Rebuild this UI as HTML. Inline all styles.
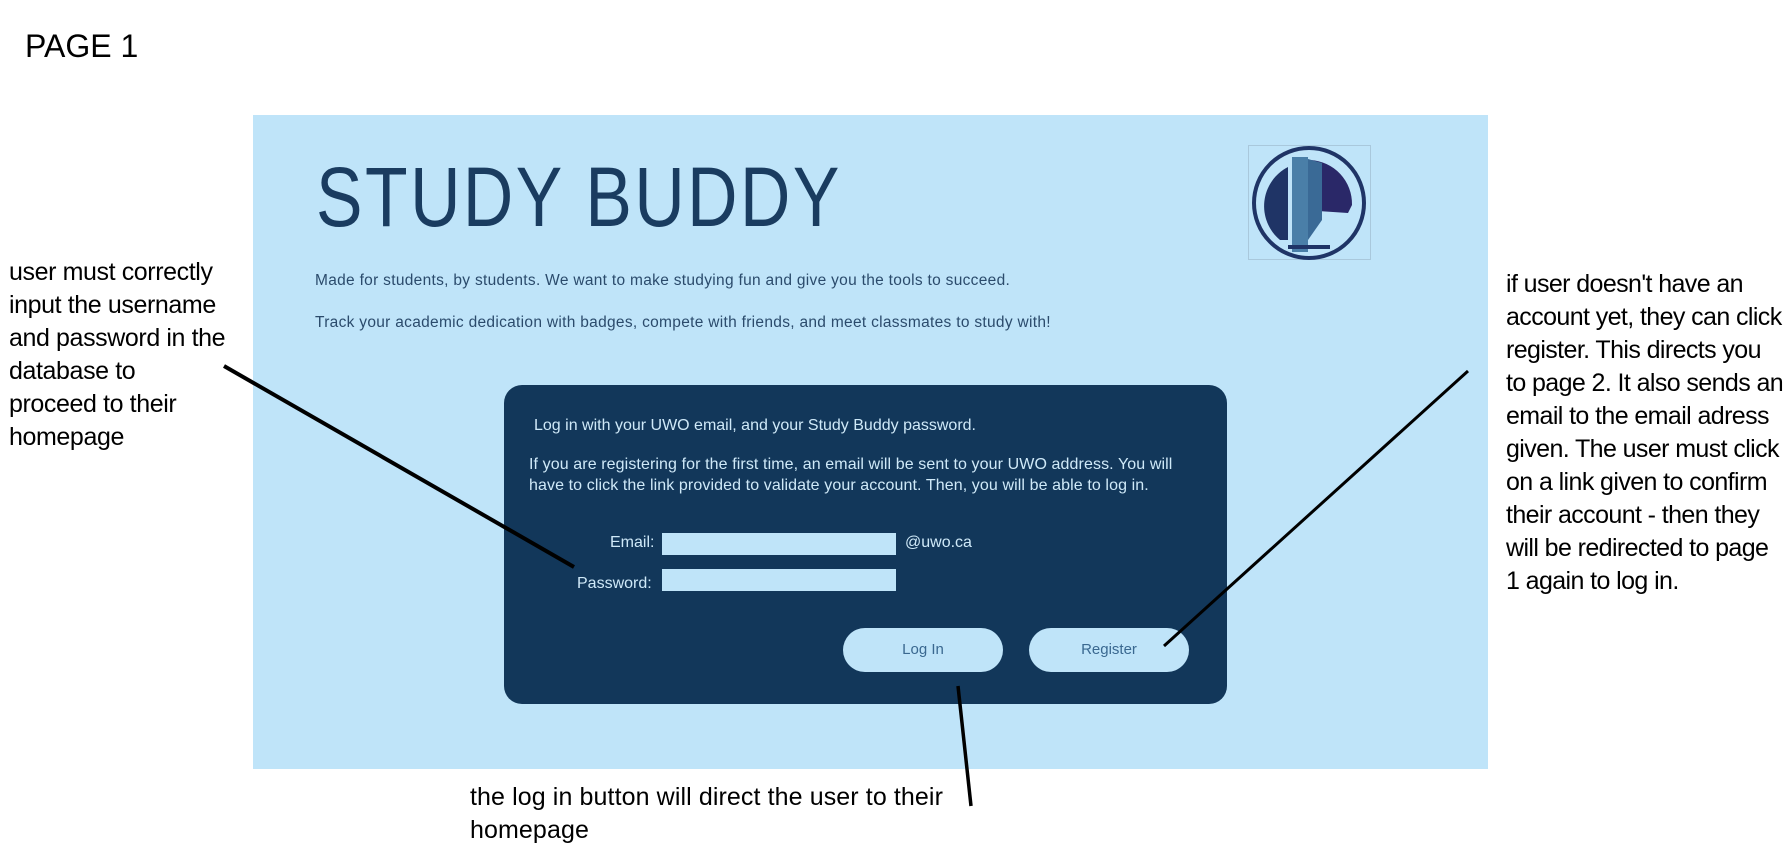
<!DOCTYPE html>
<html><head><style>
body{margin:0;width:1789px;height:851px;background:#fff;position:relative;overflow:hidden;font-family:"Liberation Sans",sans-serif}
.a{position:absolute;white-space:nowrap}
.ann{font-size:25px;line-height:33px;color:#000;letter-spacing:-0.6px}
.panel{position:absolute;left:253px;top:115px;width:1235px;height:654px;background:#bfe4f9}
.box{position:absolute;left:504px;top:385px;width:723px;height:319px;background:#12375a;border-radius:18px}
.lt{color:#cfe9f8;font-size:16px}
.inp{position:absolute;background:#bfe4f9;width:234px;height:22px}
.btn{position:absolute;background:#bfe4f9;border-radius:22px;width:160px;height:44px;line-height:44px;text-align:center;color:#3a6890;font-size:15px}
</style></head><body>
<div class="a" style="left:25px;top:28px;font-size:32px">PAGE 1</div>
<div class="panel"></div>
<div class="a" style="left:316px;top:154px;font-size:84px;line-height:86px;color:#1a3c60;transform:scaleX(0.83);transform-origin:left top;letter-spacing:3px">STUDY BUDDY</div>
<svg class="a" style="left:1248px;top:145px" width="124" height="116" viewBox="0 0 124 116">
<rect x="0.5" y="0.5" width="122" height="114" fill="none" stroke="#a9c8dc" stroke-width="1"/>
<circle cx="61" cy="58" r="55" fill="#bfe4f9" stroke="#1f3466" stroke-width="4"/>
<path d="M32 95 A44 44 0 0 1 40 22 L40 95Z" fill="#1f3466"/>
<path d="M62 15 A44 44 0 0 1 104 60 L100 68 L70 66 L62 70Z" fill="#2a2868"/>
<rect x="44" y="12" width="16" height="95" fill="#4a7fa8"/>
<path d="M60 14 L74 18 L74 75 L60 95Z" fill="#3a6a96"/>
<rect x="40" y="100" width="42" height="4" fill="#1f3466"/>
</svg>
<div class="a" style="left:315px;top:272px;font-size:15.5px;color:#2b4b6c;letter-spacing:0.3px">Made for students, by students. We want to make studying fun and give you the tools to succeed.</div>
<div class="a" style="left:315px;top:314px;font-size:15.5px;color:#2b4b6c;letter-spacing:0.3px">Track your academic dedication with badges, compete with friends, and meet classmates to study with!</div>
<div class="box"></div>
<div class="a lt" style="left:534px;top:417px">Log in with your UWO email, and your Study Buddy password.</div>
<div class="a lt" style="left:529px;top:456px;letter-spacing:0.1px">If you are registering for the first time, an email will be sent to your UWO address. You will</div>
<div class="a lt" style="left:529px;top:477px;letter-spacing:0.1px">have to click the link provided to validate your account. Then, you will be able to log in.</div>
<div class="a lt" style="left:610px;top:534px">Email:</div>
<div class="inp" style="left:662px;top:533px"></div>
<div class="a lt" style="left:905px;top:534px">@uwo.ca</div>
<div class="a lt" style="left:577px;top:575px">Password:</div>
<div class="inp" style="left:662px;top:569px"></div>
<div class="btn" style="left:843px;top:628px">Log In</div>
<div class="btn" style="left:1029px;top:628px">Register</div>
<div class="a ann" style="left:9px;top:256px;letter-spacing:-0.4px">user must correctly<br>input the username<br>and password in the<br>database to<br>proceed to their<br>homepage</div>
<div class="a ann" style="left:1506px;top:268px">if user doesn't have an<br>account yet, they can click<br>register. This directs you<br>to page 2. It also sends an<br>email to the email adress<br>given. The user must click<br>on a link given to confirm<br>their account - then they<br>will be redirected to page<br>1 again to log in.</div>
<div class="a ann" style="left:470px;top:781px;letter-spacing:0.1px">the log in button will direct the user to their<br>homepage</div>
<svg class="a" style="left:0;top:0" width="1789" height="851">
<line x1="224" y1="366" x2="574" y2="567" stroke="#000" stroke-width="4"/>
<line x1="1468" y1="371" x2="1164" y2="646" stroke="#000" stroke-width="3"/>
<line x1="958" y1="686" x2="971" y2="806" stroke="#000" stroke-width="3.5"/>
</svg>
</body></html>
